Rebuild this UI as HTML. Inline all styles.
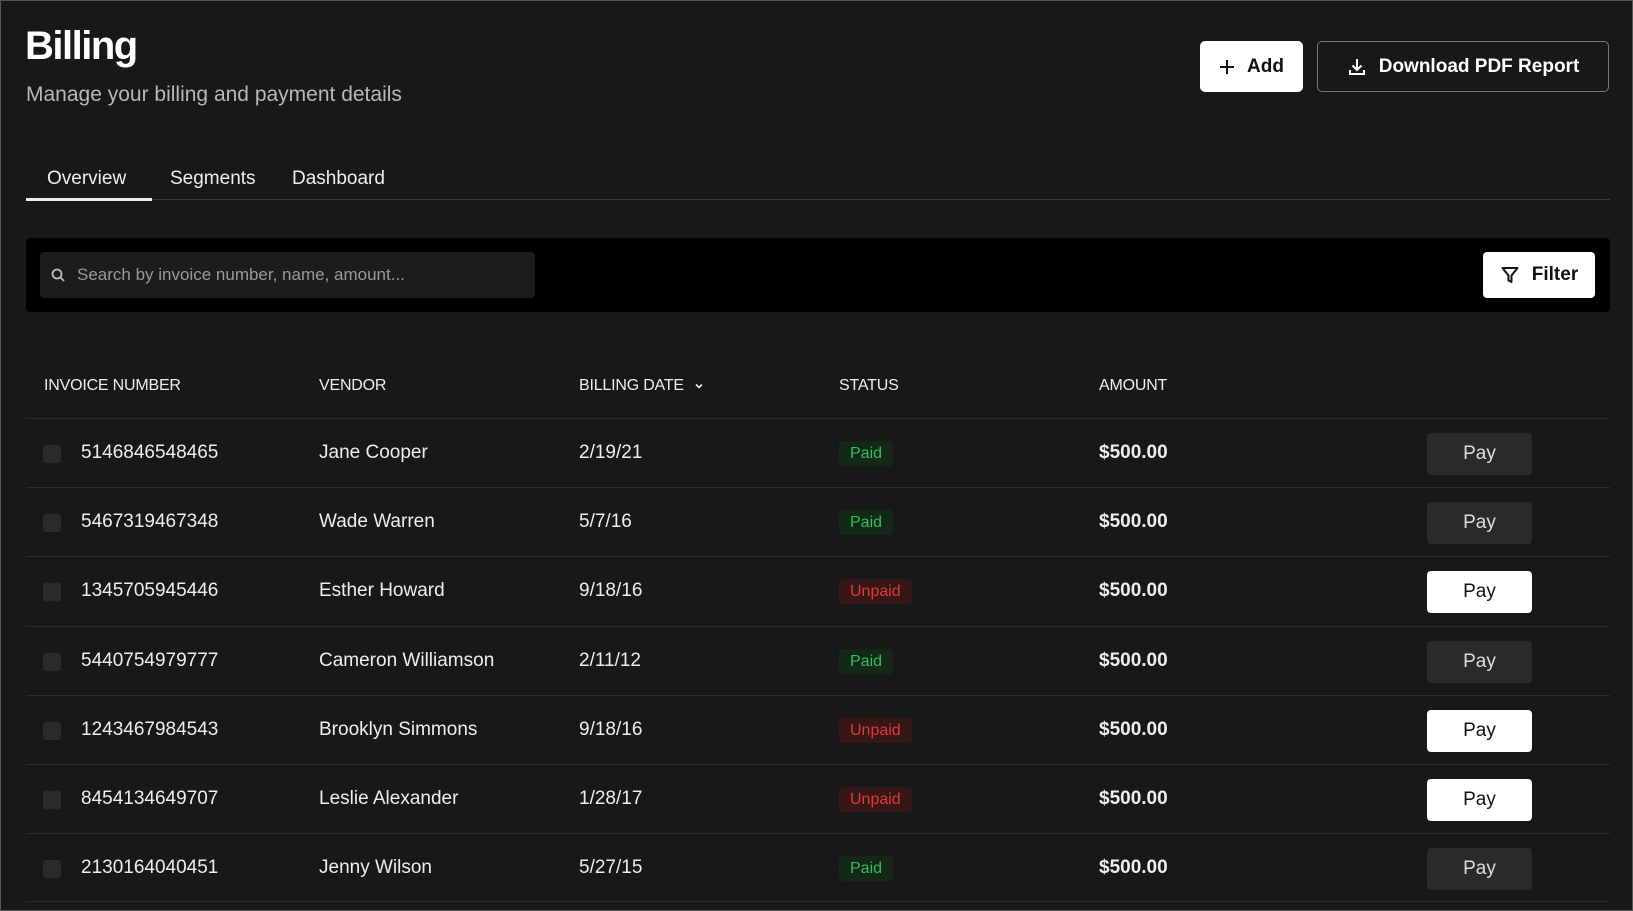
<!DOCTYPE html>
<html><head><meta charset="utf-8"><style>
*{box-sizing:border-box;margin:0;padding:0}
html,body{width:1633px;height:911px;overflow:hidden;background:#181818;font-family:"Liberation Sans",sans-serif;color:#fff}
body{position:relative;border:1px solid #555}
.abs{position:absolute;white-space:nowrap}
h1{position:absolute;left:24px;top:23px;font-size:40px;font-weight:600;letter-spacing:-1.5px}
.sub{left:25px;top:82px;font-size:21px;color:#b8b8b8}
.btn{position:absolute;border-radius:5px;display:flex;align-items:center;justify-content:center;font-size:19px;font-weight:600;gap:12px}
.tab{top:167px;font-size:19px;color:#eee}
.row{position:absolute;left:25px;width:1584px;height:69px;border-top:1px solid #2c2c2c}
.row .c{position:absolute;top:0;height:68px;line-height:68px;font-size:19px;color:#eee;white-space:nowrap}
.cb{position:absolute;left:17px;top:26px;width:18px;height:18px;background:#2a2a2a;border-radius:3px}
.row .badge{position:absolute;left:813px;top:22px;height:25px;line-height:25px;padding:0 11px;border-radius:4px;font-size:16px;white-space:nowrap}
.paid{background:#142818;color:#2fc15c}
.unpaid{background:#361616;color:#e23838}
.row .pay{position:absolute;left:1401px;top:14px;width:105px;height:42px;line-height:42px;text-align:center;border-radius:4px;font-size:19px}
.pd{background:#2a2a2a;color:#ddd}
.pw{background:#fff;color:#111}
.hd{top:376px;font-size:16px;color:#eee;letter-spacing:-0.2px}
</style></head><body>
<h1>Billing</h1>
<div class="abs sub">Manage your billing and payment details</div>
<div class="btn" style="left:1199px;top:40px;width:103px;height:51px;background:#fff;color:#111"><svg width="16" height="16" viewBox="0 0 16 16"><path d="M8 1v14M1 8h14" stroke="#111" stroke-width="2"/></svg>Add</div>
<div class="btn" style="left:1316px;top:40px;width:292px;height:51px;border:1px solid #777;color:#fff"><svg width="20" height="20" viewBox="0 0 20 20" fill="none" stroke="#fff" stroke-width="2"><path d="M10 2v11M5.5 8.5 10 13l4.5-4.5M3 13v4h14v-4"/></svg>Download PDF Report</div>
<div class="abs tab" style="left:46px">Overview</div>
<div class="abs tab" style="left:169px">Segments</div>
<div class="abs tab" style="left:291px">Dashboard</div>
<div class="abs" style="left:25px;top:198px;width:1584px;height:1px;background:#3a3a3a"></div>
<div class="abs" style="left:25px;top:197px;width:126px;height:3px;background:#eee"></div>
<div class="abs" style="left:25px;top:237px;width:1584px;height:74px;background:#000;border-radius:4px"></div>
<div class="abs" style="left:39px;top:251px;width:495px;height:46px;background:#1c1c1c;border-radius:4px"></div>
<svg class="abs" style="left:50px;top:267px" width="14" height="14" viewBox="0 0 14 14" fill="none" stroke="#bbb" stroke-width="1.8"><circle cx="6" cy="6" r="4.5"/><path d="M9.3 9.3 13 13"/></svg>
<div class="abs" style="left:76px;top:264px;font-size:17px;color:#9a9a9a">Search by invoice number, name, amount...</div>
<div class="btn" style="left:1482px;top:251px;width:112px;height:46px;background:#fff;color:#111;border-radius:4px"><svg width="20" height="20" viewBox="0 0 20 20" fill="none" stroke="#111" stroke-width="2" stroke-linejoin="round"><path d="M2.5 3h15l-6 7.5V17l-3-1.5v-5z"/></svg>Filter</div>
<div class="abs hd" style="left:43px">INVOICE NUMBER</div>
<div class="abs hd" style="left:318px">VENDOR</div>
<div class="abs hd" style="left:578px">BILLING DATE <svg width="10" height="8" viewBox="0 0 10 8" style="margin-left:6px"><path d="M2 2.5 5 5.5 8 2.5" stroke="#eee" stroke-width="1.6" fill="none"/></svg></div>
<div class="abs hd" style="left:838px">STATUS</div>
<div class="abs hd" style="left:1098px">AMOUNT</div>

<div class="row" style="top:417px"><span class="cb"></span><div class="c" style="left:55px">5146846548465</div><div class="c" style="left:293px">Jane Cooper</div><div class="c" style="left:553px">2/19/21</div><div class="badge paid">Paid</div><div class="c" style="left:1073px;font-weight:600">$500.00</div><div class="pay pd">Pay</div></div>
<div class="row" style="top:486px"><span class="cb"></span><div class="c" style="left:55px">5467319467348</div><div class="c" style="left:293px">Wade Warren</div><div class="c" style="left:553px">5/7/16</div><div class="badge paid">Paid</div><div class="c" style="left:1073px;font-weight:600">$500.00</div><div class="pay pd">Pay</div></div>
<div class="row" style="top:555px"><span class="cb"></span><div class="c" style="left:55px">1345705945446</div><div class="c" style="left:293px">Esther Howard</div><div class="c" style="left:553px">9/18/16</div><div class="badge unpaid">Unpaid</div><div class="c" style="left:1073px;font-weight:600">$500.00</div><div class="pay pw">Pay</div></div>
<div class="row" style="top:625px"><span class="cb"></span><div class="c" style="left:55px">5440754979777</div><div class="c" style="left:293px">Cameron Williamson</div><div class="c" style="left:553px">2/11/12</div><div class="badge paid">Paid</div><div class="c" style="left:1073px;font-weight:600">$500.00</div><div class="pay pd">Pay</div></div>
<div class="row" style="top:694px"><span class="cb"></span><div class="c" style="left:55px">1243467984543</div><div class="c" style="left:293px">Brooklyn Simmons</div><div class="c" style="left:553px">9/18/16</div><div class="badge unpaid">Unpaid</div><div class="c" style="left:1073px;font-weight:600">$500.00</div><div class="pay pw">Pay</div></div>
<div class="row" style="top:763px"><span class="cb"></span><div class="c" style="left:55px">8454134649707</div><div class="c" style="left:293px">Leslie Alexander</div><div class="c" style="left:553px">1/28/17</div><div class="badge unpaid">Unpaid</div><div class="c" style="left:1073px;font-weight:600">$500.00</div><div class="pay pw">Pay</div></div>
<div class="row" style="top:832px;border-bottom:1px solid #2c2c2c"><span class="cb"></span><div class="c" style="left:55px">2130164040451</div><div class="c" style="left:293px">Jenny Wilson</div><div class="c" style="left:553px">5/27/15</div><div class="badge paid">Paid</div><div class="c" style="left:1073px;font-weight:600">$500.00</div><div class="pay pd">Pay</div></div>
</body></html>
